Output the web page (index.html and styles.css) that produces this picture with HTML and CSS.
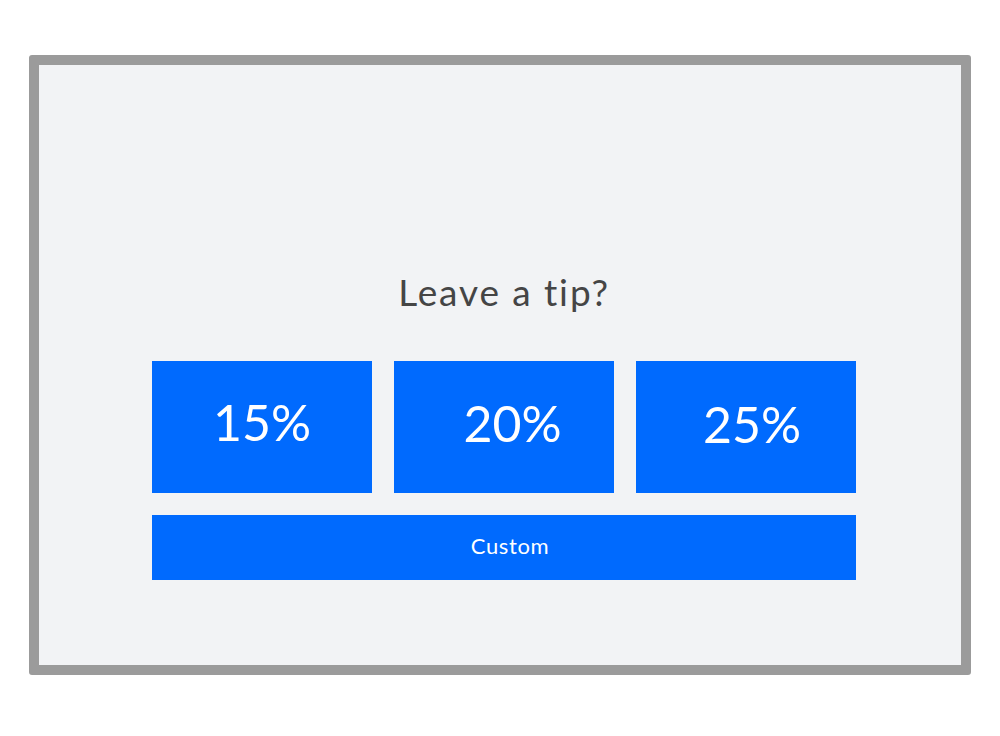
FILE: index.html
```html
<!DOCTYPE html>
<html lang="en">
<head>
<meta charset="utf-8">
<title>Leave a tip</title>
<link rel="stylesheet" href="styles.css">
</head>
<body>
<div class="frame">
  <div class="screen">
    <h1 class="title">Leave a tip?</h1>
    <div class="options">
      <button class="tip tip-15">15%</button>
      <button class="tip tip-20">20%</button>
      <button class="tip tip-25">25%</button>
    </div>
    <button class="custom">Custom</button>
  </div>
</div>
</body>
</html>
```
FILE: styles.css
```css
* { box-sizing: border-box; }
html, body { margin: 0; padding: 0; background: #ffffff; }
body {
  font-family: Lato, "Open Sans", "Liberation Sans", sans-serif;
  font-variant-ligatures: none;
  font-feature-settings: "liga" 0, "clig" 0;
  padding-top: 55px;
  padding-left: 29px;
}
.frame {
  width: 942px;
  height: 620px;
  border: 10px solid #9b9b9b;
  border-radius: 3px;
  background: #f2f3f5;
}
.screen {
  height: 100%;
  padding: 205px 105px 0 113px;
  display: flex;
  flex-direction: column;
}
.title {
  margin: 0;
  height: 44px;
  line-height: 44px;
  font-size: 37px;
  font-weight: 400;
  letter-spacing: 1.9px;
  color: #454545;
  text-align: center;
}
.options {
  margin-top: 47px;
  display: grid;
  grid-template-columns: repeat(3, 220px);
  gap: 22px;
}
.tip, .custom {
  border: none;
  margin: 0;
  padding: 0;
  background: #006afe;
  color: #ffffff;
  font-family: inherit;
  font-weight: 400;
  font-variant-ligatures: none;
  cursor: pointer;
}
.tip {
  height: 132px;
  font-size: 50px;
}
.tip-15 { padding-bottom: 10px; }
.tip-20 { padding-left: 17px; padding-bottom: 9px; }
.tip-25 { padding-left: 12px; padding-bottom: 6px; }
.custom {
  margin-top: 22px;
  height: 65px;
  font-size: 22px;
  letter-spacing: 0.6px;
  padding-left: 12px;
  padding-bottom: 4px;
}
```
